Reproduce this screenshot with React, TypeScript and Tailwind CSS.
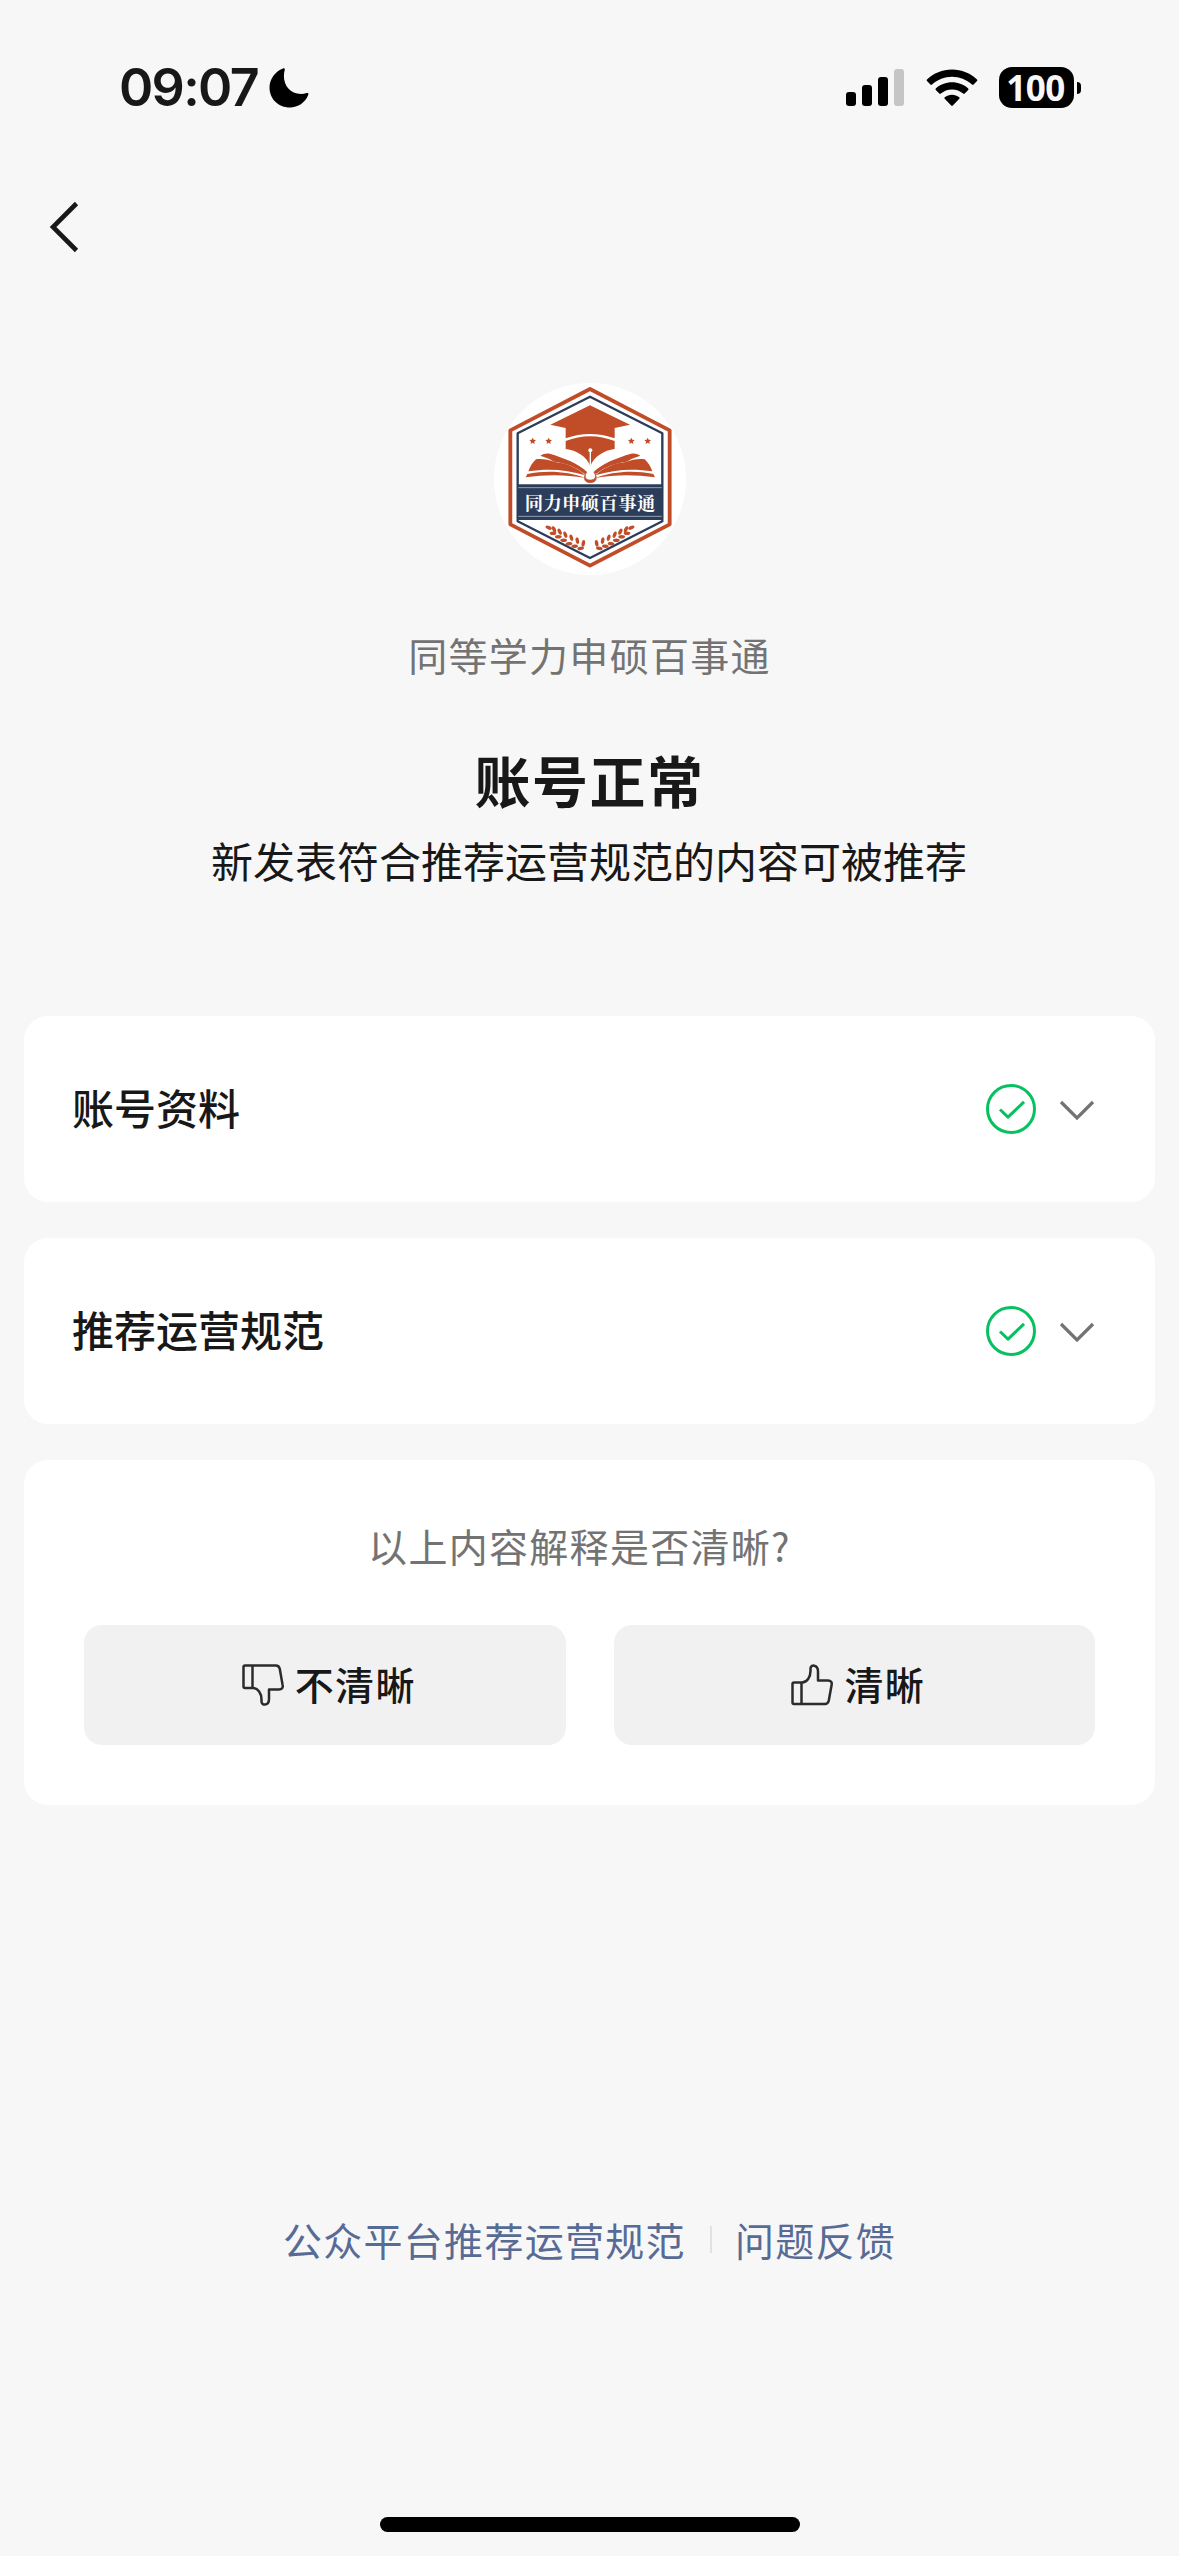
import React, { useState } from 'react';

const sections = [
  { id: 'profile', title: '账号资料' },
  { id: 'rules', title: '推荐运营规范' },
];

const signalBars = ['h-[14px] bg-black', 'h-[21px] bg-black', 'h-[29px] bg-black', 'h-[37px] bg-[#c5c5c5]'];

// One half of the wreath, leaves run from the outer tip to the stem
const leaves = [
  { x: 206, y: 472, r: 25 },
  { x: 222, y: 477, r: 65 },
  { x: 219, y: 489, r: 0 },
  { x: 239, y: 484, r: 65 },
  { x: 235, y: 499, r: 0 },
  { x: 256, y: 493, r: 70 },
  { x: 251, y: 510, r: 0 },
  { x: 274, y: 502, r: 75 },
  { x: 267, y: 520, r: -5 },
  { x: 292, y: 511, r: 80 },
  { x: 284, y: 528, r: -5 },
  { x: 310, y: 519, r: 100 },
  { x: 302, y: 534, r: -10 },
];

const stars = [158, 206, 454, 503];

function Moon() {
  return (
    <svg className="w-[40px] h-[40px]" viewBox="0 0 40 40" fill="#000">
      <path d="M14 .4c1.2-.5 2.2.5 1.7 1.7C12.500 14 19 26 32 26c2 0 4-.3 5.600-.9 1.300-.5 2.200.5 1.700 1.700C36 35 29 39.500 21 39.500 9.500 39.500.5 31 .5 19.500.5 11 6 3.500 14 .4Z" />
    </svg>
  );
}

function Wifi() {
  return (
    <svg className="w-[52px] h-[38px]" viewBox="0 0 52 38" fill="#000">
      <path d="M26 .5c9.600 0 18.500 3.700 25 10 .5.500.5 1.100 0 1.600l-3.400 3.400c-.5.500-1.100.5-1.600 0C40.500 10.500 33.500 7.700 26 7.700S11.500 10.500 6 15.500c-.5.500-1.100.5-1.600 0L1 12.100c-.5-.5-.5-1.100 0-1.600C7.500 4.200 16.400.5 26 .5Z" />
      <path d="M26 13.300c6.200 0 11.900 2.300 16.200 6.200.5.500.5 1.100 0 1.600l-3.500 3.500c-.4.400-1 .4-1.500 0-3-2.700-6.900-4.200-11.200-4.200s-8.200 1.500-11.200 4.200c-.5.400-1.100.4-1.500 0l-3.500-3.500c-.5-.5-.5-1.100 0-1.600 4.300-3.900 10-6.200 16.200-6.200Z" />
      <path d="M26 25.700c2.700 0 5.200.9 7.200 2.500.5.400.5 1.100.1 1.500l-6.500 6.800c-.5.500-1.100.5-1.600 0l-6.500-6.800c-.4-.4-.4-1.100.1-1.500 2-1.600 4.500-2.500 7.200-2.500Z" />
    </svg>
  );
}

function StatusBar() {
  return (
    <div className="h-[176px] pl-[119px] pr-[98px] pb-px flex items-center justify-between">
      <div className="flex items-center gap-[11px]">
        <span className="pt-px font-['Inter'] font-semibold text-[52px] leading-none tracking-[-1.7px]">09:07</span>
        <Moon />
      </div>
      <div className="flex items-center">
        <div className="flex items-end gap-[6px]">
          {signalBars.map((bar, index) => (
            <div key={index} className={`w-[10px] rounded-[3px] ${bar}`} />
          ))}
        </div>
        <div className="ml-[22px]">
          <Wifi />
        </div>
        <div className="ml-[21px] w-[75px] h-[41px] rounded-[13px] bg-black flex items-center justify-center">
          <span className="pr-[2px] font-['Open_Sans'] font-bold text-[35px] leading-none tracking-[-0.5px] text-[#f7f7f7]">100</span>
        </div>
        <div className="ml-[3px] w-[4px] h-[12px] rounded-r-full bg-black" />
      </div>
    </div>
  );
}

function Logo() {
  return (
    <svg className="w-[192px] h-[192px]" viewBox="42 38 576 576">
      <circle cx="330" cy="326" r="288" fill="#fff" />
      <path d="M330 56 569 180V462L330 586 91 462V180Z" fill="none" stroke="#c04d28" strokeWidth="11.500" strokeLinejoin="round" />
      <path d="M330 79 547 189V453L330 563 113 453V189Z" fill="none" stroke="#2b3d5b" strokeWidth="7" strokeLinejoin="round" />
      <g fill="#c04d28">
        {/* Cap */}
        <path d="M330 105 450 163 404 173V204Q330 178 257 204V173L211 163Z" />
        <path d="M257 212Q330 184 404 212V236C372 240 342 258 331 288 320 258 290 240 257 236Z" />
        {/* Book */}
        <path d="M181 256C190 250 199 248 209 250 250 262 298 280 322 306L314 311C285 288 255 278 222 274L208 266Z" />
        <path d="M168 267C185 264 205 268 225 275 262 279 292 293 316 315 262 298 205 294 145 303 150 288 158 276 168 267Z" />
        <path d="M137 321 142 311C200 299 265 303 316 323 255 312 195 313 137 321Z" />
        <path d="M481 256C472 250 463 248 453 250 412 262 364 280 340 306L348 311C377 288 407 278 440 274L454 266Z" />
        <path d="M494 267C477 264 457 268 437 275 400 279 370 293 346 315 400 298 457 294 517 303 512 288 504 276 494 267Z" />
        <path d="M525 321 520 311C462 299 397 303 346 323 407 312 467 313 525 321Z" />
        <path d="M318 308C308 324 314 337 331 337S354 324 344 308C350 322 344 329 331 329S312 322 318 308Z" stroke="#c04d28" strokeWidth="2" />
        {stars.map((x) => (
          <path key={x} transform={`translate(${x} 212)`} d="M0-10 3-3.500 10-2.700 4.800 2 6.300 9 0 5.400-6.300 9-4.800 2-10-2.700-3-3.500Z" />
        ))}
        {leaves.map((leaf, index) => (
          <g key={index}>
            <ellipse rx="10" ry="5.200" transform={`translate(${leaf.x} ${leaf.y}) rotate(${leaf.r})`} />
            <ellipse rx="10" ry="5.200" transform={`translate(${660 - leaf.x} ${leaf.y}) rotate(${-leaf.r})`} />
          </g>
        ))}
      </g>
      <path d="M331 240V286" stroke="#fff" strokeWidth="4" />
      <circle cx="331" cy="240" r="6" fill="#fff" />
      <path d="M113 342H547V449H113Z" fill="#2b3d5b" />
      <path d="M115 352H545M115 438H545" stroke="#aab3c2" strokeWidth="2.500" />
      <text
        x="330"
        y="420"
        textAnchor="middle"
        textLength="392"
        fontSize="55"
        fontWeight="700"
        fill="#fff"
        className="font-['Noto_Serif_CJK_SC','Noto_Sans_CJK_SC',serif]"
      >
        同力申硕百事通
      </text>
    </svg>
  );
}

function ThumbUp() {
  return (
    <svg className="w-[42px] h-[42px]" viewBox="0 0 42 42" fill="none" stroke="#2b2b2b" strokeWidth="2.500" strokeLinejoin="round">
      <path d="M1.500 20Q1.500 18.500 3 18.500H11C16 18.500 19.500 13 19.500 7V4.500C19.500 .2 27 .2 27 7.500V16.500H37C40 16.500 41.200 18.500 40.600 21L37.800 36.500Q37 40 34 40H3Q1.500 40 1.500 38.500Z" />
      <path d="M10.500 18.500V40" />
    </svg>
  );
}

function ThumbDown() {
  return (
    <svg className="w-[42px] h-[42px]" viewBox="0 0 42 42" fill="none" stroke="#2b2b2b" strokeWidth="2.500" strokeLinejoin="round">
      <path d="M1.500 22.500Q1.500 24 3 24H11C16 24 19.500 29.500 19.500 35.500V37.500C19.500 42 27 42 27 35V25.500H37C40 25.500 41.200 23.500 40.600 21L37.800 5Q37 1.500 34 1.500H3Q1.500 1.500 1.500 3Z" />
      <path d="M10.500 1.500V24" />
    </svg>
  );
}

function SectionCard({ title }: { title: string }) {
  const [open, setOpen] = useState(false);

  return (
    <button
      className="w-full h-[186px] pl-12 pr-[60px] bg-white rounded-[24px] flex items-center justify-between"
      onClick={() => setOpen(!open)}
    >
      <span className="pb-1 text-[42px] leading-[60px] font-medium">{title}</span>
      <span className="flex items-center gap-[23px]">
        <svg className="w-[50px] h-[50px]" viewBox="0 0 50 50" fill="none" stroke="#07c160" strokeWidth="3">
          <circle cx="25" cy="25" r="23.500" />
          <path d="M14 25.500 22 33.200 38 17.800" strokeLinejoin="round" />
        </svg>
        <svg className="mt-[2px] w-[36px] h-[20px]" viewBox="0 0 36 20" fill="none" stroke="#737373" strokeWidth="3.200">
          <path d="M2 2 18 18 34 2" />
        </svg>
      </span>
    </button>
  );
}

function App() {
  return (
    <div className="w-[1179px] h-[2556px] flex flex-col bg-[#f7f7f7] text-[#181818] font-['Noto_Sans_CJK_SC',sans-serif]">
      <StatusBar />

      {/* Nav bar */}
      <div className="h-[102px] pl-[48px] flex items-center">
        <svg className="w-[32px] h-[52px]" viewBox="0 0 32 52" fill="none" stroke="#181818" strokeWidth="4.600">
          <path d="M28.500 2.500 5 26 28.500 49.500" />
        </svg>
      </div>

      {/* Account header */}
      <div className="pt-[105px] flex flex-col items-center">
        <Logo />
        <p className="mt-[49px] text-[39px] leading-[60px] tracking-[1.300px] text-[#737373]">同等学力申硕百事通</p>
        <h1 className="mt-[53px] text-[56px] leading-[84px] font-bold tracking-[1.500px]">账号正常</h1>
        <p className="mt-[9px] pr-px text-[42px] leading-[60px]">新发表符合推荐运营规范的内容可被推荐</p>
      </div>

      {/* Cards */}
      <div className="mt-[126px] px-6 flex flex-col gap-9">
        {sections.map((section) => (
          <SectionCard key={section.id} title={section.title} />
        ))}
        <div className="h-[345px] px-[60px] pt-[55px] bg-white rounded-[24px]">
          <p className="pr-[20px] text-center text-[39px] leading-[60px] tracking-[1.300px] text-[#737373]">以上内容解释是否清晰?</p>
          <div className="mt-[50px] grid grid-cols-2 gap-12 text-[39px] font-medium tracking-[1.300px]">
            <button className="h-[120px] pl-2 rounded-[18px] bg-[#f1f1f1] flex items-center justify-center gap-[11px]">
              <ThumbDown />
              <span className="pb-[3px]">不清晰</span>
            </button>
            <button className="h-[120px] pl-2 rounded-[18px] bg-[#f1f1f1] flex items-center justify-center gap-[11px]">
              <ThumbUp />
              <span className="pb-[3px]">清晰</span>
            </button>
          </div>
        </div>
      </div>

      {/* Footer links */}
      <div className="mt-[404px] flex items-center justify-center text-[39px] leading-[60px] tracking-[1.300px] text-[#576b95]">
        <a>公众平台推荐运营规范</a>
        <div className="mt-px ml-[24px] mr-[23px] w-[2px] h-[27px] bg-[#e2e2e2]" />
        <a>问题反馈</a>
      </div>

      {/* Home indicator */}
      <div className="mt-auto mb-[24px] self-center w-[420px] h-[15px] rounded-full bg-black" />
    </div>
  );
}

export default App;
